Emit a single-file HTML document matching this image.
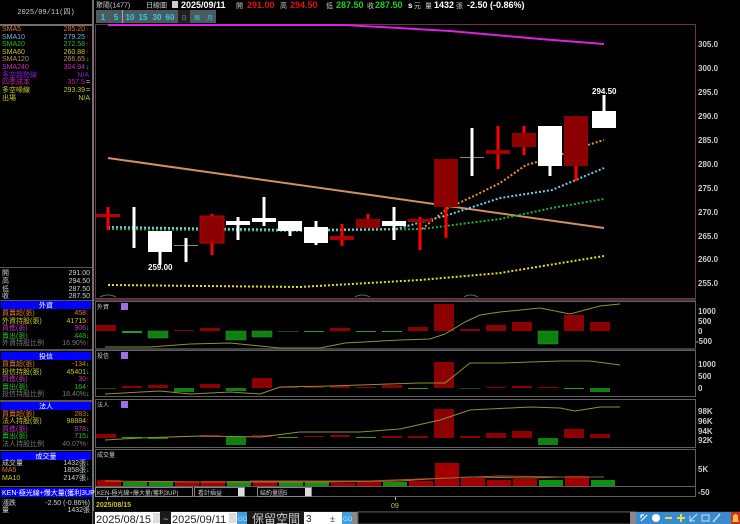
<!DOCTYPE html>
<html><head><meta charset="utf-8"><style>
html,body{margin:0;padding:0;background:#000;width:740px;height:524px;overflow:hidden}
svg{display:block}
text{font-family:"Liberation Sans","Noto Sans CJK TC",sans-serif}
.s{font-size:7px}
.m{font-family:"Liberation Mono","Noto Sans CJK TC",monospace}
</style></head><body>
<svg width="740" height="524" viewBox="0 0 740 524" xmlns="http://www.w3.org/2000/svg">
<rect width="740" height="524" fill="#000"/>
<rect x="92" y="0" width="2" height="524" fill="#707070"/>
<rect x="0" y="24" width="92" height="2" fill="#707070"/>
<text x="46" y="14" fill="#d0d0d0" font-size="7" text-anchor="middle" class="m">2025/09/11(四)</text>
<g class="s m" font-size="7">
<text x="2" y="31" fill="#e07830">SMA5</text><text x="85" y="31" fill="#e07830" text-anchor="end">285.20</text><text x="86" y="31" fill="#f00">↑</text>
<text x="2" y="39" fill="#70b8e0">SMA10</text><text x="85" y="39" fill="#70b8e0" text-anchor="end">279.25</text><text x="86" y="39" fill="#f00">↑</text>
<text x="2" y="46" fill="#20c020">SMA20</text><text x="85" y="46" fill="#20c020" text-anchor="end">272.58</text><text x="86" y="46" fill="#f00">↑</text>
<text x="2" y="54" fill="#c8c820">SMA60</text><text x="85" y="54" fill="#c8c820" text-anchor="end">260.88</text><text x="86" y="54" fill="#f00">↑</text>
<text x="2" y="61" fill="#c09060">SMA120</text><text x="85" y="61" fill="#c09060" text-anchor="end">266.65</text><text x="86" y="61" fill="#0f0">↓</text>
<text x="2" y="69" fill="#c030c0">SMA240</text><text x="85" y="69" fill="#c030c0" text-anchor="end">304.94</text><text x="86" y="69" fill="#0f0">↓</text>
<text x="2" y="77" fill="#8020d0">多空趨勢線</text><text x="89" y="77" fill="#8020d0" text-anchor="end">N/A</text>
<text x="2" y="84" fill="#c020a0">四季成本</text><text x="85" y="84" fill="#c020a0" text-anchor="end">357.5</text><text x="86" y="84" fill="#ccc">=</text>
<text x="2" y="92" fill="#c8c820">多空噪線</text><text x="85" y="92" fill="#c8c820" text-anchor="end">293.39</text><text x="86" y="92" fill="#ccc">=</text>
<text x="2" y="100" fill="#c8c820">出場</text><text x="90" y="100" fill="#c8c820" text-anchor="end">N/A</text>
</g>
<rect x="0" y="267" width="92" height="1" fill="#555"/>
<g font-size="7" class="m" fill="#d0d0d0">
<text x="2" y="275">開</text><text x="90" y="275" text-anchor="end">291.00</text>
<text x="2" y="283">高</text><text x="90" y="283" text-anchor="end">294.50</text>
<text x="2" y="291">低</text><text x="90" y="291" text-anchor="end">287.50</text>
<text x="2" y="298">收</text><text x="90" y="298" text-anchor="end">287.50</text>
</g>
<g font-size="7" class="m">
<rect x="0" y="300" width="92" height="1" fill="#555"/>
<rect x="1" y="301" width="90" height="8" fill="#0000ff"/><text x="46" y="307.5" fill="#fff" text-anchor="middle">外資</text>
<text x="2" y="315" fill="#e07830">買賣超(張)</text><text x="86" y="315" fill="#e07830" text-anchor="end">458</text><text x="86" y="315" fill="#f00">↑</text>
<text x="2" y="323" fill="#c8c820">外資持股(張)</text><text x="86" y="323" fill="#c8c820" text-anchor="end">41715</text><text x="86" y="323" fill="#f00">↑</text>
<text x="2" y="330" fill="#c030c0">買進(張)</text><text x="86" y="330" fill="#c030c0" text-anchor="end">906</text><text x="86" y="330" fill="#0f0">↓</text>
<text x="2" y="338" fill="#20c020">賣出(張)</text><text x="86" y="338" fill="#20c020" text-anchor="end">448</text><text x="86" y="338" fill="#0f0">↓</text>
<text x="2" y="345" fill="#777">外資持股比例</text><text x="86" y="345" fill="#777" text-anchor="end">16.90%</text><text x="86" y="345" fill="#f00">↑</text>
<rect x="0" y="349" width="92" height="2" fill="#555"/>
<rect x="1" y="352" width="90" height="8" fill="#0000ff"/><text x="46" y="358.5" fill="#fff" text-anchor="middle">投信</text>
<text x="2" y="366" fill="#e07830">買賣超(張)</text><text x="86" y="366" fill="#e07830" text-anchor="end">-134</text><text x="86" y="366" fill="#0f0">↓</text>
<text x="2" y="374" fill="#c8c820">投信持股(張)</text><text x="86" y="374" fill="#c8c820" text-anchor="end">45401</text><text x="86" y="374" fill="#0f0">↓</text>
<text x="2" y="381" fill="#c030c0">買進(張)</text><text x="86" y="381" fill="#c030c0" text-anchor="end">30</text><text x="86" y="381" fill="#f00">↑</text>
<text x="2" y="389" fill="#20c020">賣出(張)</text><text x="86" y="389" fill="#20c020" text-anchor="end">164</text><text x="86" y="389" fill="#f00">↑</text>
<text x="2" y="396" fill="#777">投信持股比例</text><text x="86" y="396" fill="#777" text-anchor="end">18.40%</text><text x="86" y="396" fill="#0f0">↓</text>
<rect x="0" y="400" width="92" height="2" fill="#555"/>
<rect x="1" y="402" width="90" height="8" fill="#0000ff"/><text x="46" y="408.5" fill="#fff" text-anchor="middle">法人</text>
<text x="2" y="416" fill="#e07830">買賣超(張)</text><text x="86" y="416" fill="#e07830" text-anchor="end">283</text><text x="86" y="416" fill="#0f0">↓</text>
<text x="2" y="423" fill="#c8c820">法人持股(張)</text><text x="86" y="423" fill="#c8c820" text-anchor="end">98884</text><text x="86" y="423" fill="#f00">↑</text>
<text x="2" y="431" fill="#c030c0">買進(張)</text><text x="86" y="431" fill="#c030c0" text-anchor="end">978</text><text x="86" y="431" fill="#0f0">↓</text>
<text x="2" y="438" fill="#20c020">賣出(張)</text><text x="86" y="438" fill="#20c020" text-anchor="end">715</text><text x="86" y="438" fill="#0f0">↓</text>
<text x="2" y="446" fill="#777">法人持股比例</text><text x="86" y="446" fill="#777" text-anchor="end">40.07%</text><text x="86" y="446" fill="#f00">↑</text>
<rect x="0" y="450" width="92" height="1" fill="#555"/>
<rect x="1" y="452" width="90" height="8" fill="#0000ff"/><text x="46" y="458.5" fill="#fff" text-anchor="middle">成交量</text>
<text x="2" y="465" fill="#d0d0d0">成交量</text><text x="86" y="465" fill="#d0d0d0" text-anchor="end">1432張</text><text x="86" y="465" fill="#0f0">↓</text>
<text x="2" y="472" fill="#e07830">MA5</text><text x="86" y="472" fill="#d0d0d0" text-anchor="end">1858張</text><text x="86" y="472" fill="#0f0">↓</text>
<text x="2" y="480" fill="#c8c820">MA10</text><text x="86" y="480" fill="#d0d0d0" text-anchor="end">2147張</text><text x="86" y="480" fill="#0f0">↓</text>
<rect x="0" y="486" width="92" height="1" fill="#555"/>
<rect x="1" y="488" width="91" height="9" fill="#0000ff"/><text x="2" y="495" fill="#fff">KEN-極光線+爆大量(獲利3UP)</text>
<text x="2" y="505" fill="#d0d0d0">漲跌</text><text x="90" y="505" fill="#d0d0d0" text-anchor="end">-2.50 (-0.86%)</text>
<text x="2" y="512" fill="#d0d0d0">量</text><text x="90" y="512" fill="#d0d0d0" text-anchor="end">1432張</text>
</g>
<g font-size="8">
<text x="96" y="7.5" fill="#ccc" font-size="7">聚陽(1477)</text>
<text x="146" y="7.5" fill="#ccc" font-size="7">日線圖</text>
<rect x="172" y="1" width="6" height="7" fill="#ccc"/>
<text x="181" y="8" fill="#fff" font-weight="bold" font-size="9">2025/09/11</text>
<text x="236" y="8" fill="#ccc" font-size="7">開</text><text x="247" y="8" fill="#e01010" font-weight="bold" font-size="9">291.00</text>
<text x="280" y="8" fill="#ccc" font-size="7">高</text><text x="290" y="8" fill="#e01010" font-weight="bold" font-size="9">294.50</text>
<text x="326" y="8" fill="#ccc" font-size="7">低</text><text x="336" y="8" fill="#20d020" font-weight="bold" font-size="9">287.50</text>
<text x="367" y="8" fill="#ccc" font-size="7">收</text><text x="375" y="8" fill="#20d020" font-weight="bold" font-size="9">287.50</text>
<text x="408" y="8" fill="#fff" font-weight="bold" font-size="8">s</text><text x="414" y="8" fill="#ccc" font-size="7">元</text>
<text x="425" y="8" fill="#ccc" font-size="7">量</text><text x="434" y="8" fill="#fff" font-weight="bold" font-size="9">1432</text>
<text x="456" y="8" fill="#ccc" font-size="7">張</text>
<text x="467" y="8" fill="#fff" font-weight="bold" font-size="9">-2.50 (-0.86%)</text>
</g>
<g font-size="8" font-weight="bold" fill="#30d0d8" text-anchor="middle">
<rect x="96" y="10" width="120" height="13" fill="#4a5a60"/>
<rect x="178" y="10" width="12" height="13" fill="#202020"/>
<rect x="122" y="10" width="1" height="13" fill="#aaa"/>
<text x="103" y="20">1</text><text x="116" y="20">5</text><text x="130" y="20">10</text><text x="143" y="20">15</text><text x="157" y="20">30</text><text x="170" y="20">60</text>
<text x="184" y="20" fill="#777" font-size="6" font-weight="normal">日</text><text x="197" y="20" font-size="6" font-weight="normal">周</text><text x="210" y="20" font-size="6" font-weight="normal">月</text>
</g>
<rect x="95.5" y="24.5" width="600" height="274" fill="none" stroke="#703050" stroke-width="1"/>
<rect x="94" y="299" width="602" height="2" fill="#503040"/>
<g font-size="8" fill="#ccc" font-weight="bold">
<text x="698" y="47">305.0</text><text x="698" y="71">300.0</text><text x="698" y="95">295.0</text><text x="698" y="119">290.0</text><text x="698" y="143">285.0</text><text x="698" y="167">280.0</text><text x="698" y="191">275.0</text><text x="698" y="215">270.0</text><text x="698" y="239">265.0</text><text x="698" y="262">260.0</text><text x="698" y="286">255.0</text>
</g>
<polyline points="108,25 345,25 450,31 540,39 604,44" fill="none" stroke="#e020e0" stroke-width="2"/>
<polyline points="108,158 604,228" fill="none" stroke="#d09060" stroke-width="2"/>
<polyline points="108,285 300,287 420,280 500,273 604,256" fill="none" stroke="#e0e020" stroke-width="2" stroke-dasharray="2,2"/>
<polyline points="108,229 300,231 422,229 500,219 552,208 604,199" fill="none" stroke="#20b040" stroke-width="2" stroke-dasharray="2,2"/>
<polyline points="108,227 300,230 396,229 448,215 500,198 552,190 578,179 604,168" fill="none" stroke="#80c8e8" stroke-width="2" stroke-dasharray="2,2"/>
<polyline points="422,229 448,208 474,196 500,183 526,165 552,158 578,148 604,140" fill="none" stroke="#f09030" stroke-width="2" stroke-dasharray="2,2"/>
<g>
<rect x="106.5" y="207" width="3" height="23" fill="#f00"/><rect x="96" y="214" width="24" height="3" fill="#c00000"/>
<rect x="132.5" y="207" width="3" height="41" fill="#fff"/>
<rect x="158.5" y="250" width="3" height="15" fill="#fff"/><rect x="148" y="231" width="24" height="21" fill="#fff"/>
<rect x="174" y="245" width="24" height="1" fill="#888"/><rect x="184.5" y="238" width="3" height="24" fill="#fff"/>
<rect x="210.5" y="214" width="3" height="41" fill="#f00"/><rect x="200" y="216" width="24" height="27" fill="#8b0000" stroke="#c00000"/>
<rect x="236.5" y="217" width="3" height="23" fill="#fff"/><rect x="226" y="221" width="24" height="4" fill="#fff"/>
<rect x="262.5" y="197" width="3" height="29" fill="#fff"/><rect x="252" y="218" width="24" height="4" fill="#fff"/>
<rect x="288.5" y="229" width="3" height="7" fill="#fff"/><rect x="278" y="221" width="24" height="10" fill="#fff"/>
<rect x="314.5" y="221" width="3" height="24" fill="#fff"/><rect x="304" y="227" width="24" height="16" fill="#fff"/>
<rect x="340.5" y="224" width="3" height="22" fill="#f00"/><rect x="330" y="236" width="24" height="4" fill="#b00000"/>
<rect x="366.5" y="214" width="3" height="10" fill="#f00"/><rect x="356" y="219" width="24" height="9" fill="#8b0000"/>
<rect x="392.5" y="207" width="3" height="33" fill="#fff"/><rect x="382" y="221" width="24" height="5" fill="#fff"/>
<rect x="418.5" y="217" width="3" height="33" fill="#f00"/><rect x="408" y="219" width="24" height="3" fill="#a00000"/>
<rect x="444.5" y="205" width="3" height="33" fill="#f00"/><rect x="434" y="159" width="24" height="48" fill="#8b0000"/>
<rect x="460" y="157" width="24" height="1" fill="#888"/><rect x="470.5" y="128" width="3" height="48" fill="#fff"/>
<rect x="496.5" y="126" width="3" height="43" fill="#f00"/><rect x="486" y="150" width="24" height="4" fill="#a00000"/>
<rect x="522.5" y="126" width="3" height="29" fill="#f00"/><rect x="512" y="133" width="24" height="14" fill="#8b0000"/>
<rect x="548.5" y="164" width="3" height="12" fill="#fff"/><rect x="538" y="126" width="24" height="40" fill="#fff"/>
<rect x="574.5" y="164" width="3" height="17" fill="#f00"/><rect x="564" y="116" width="24" height="50" fill="#8b0000"/>
<rect x="602.5" y="95" width="3" height="17" fill="#fff"/><rect x="592" y="111" width="24" height="17" fill="#fff"/>
</g>
<text x="148" y="270" fill="#fff" font-size="8" font-weight="bold">259.00</text>
<text x="592" y="94" fill="#fff" font-size="8" font-weight="bold">294.50</text>
<path d="M100,297 Q108,293 116,297 M355,297 Q362,293 370,297 M464,297 Q470,293 478,297" stroke="#3a7a5a" fill="none"/>
<g fill="none" stroke="#606060">
<rect x="95.5" y="301.5" width="600" height="47"/>
<rect x="95.5" y="350.5" width="600" height="46"/>
<rect x="95.5" y="399.5" width="600" height="48"/>
<rect x="95.5" y="449.5" width="600" height="37"/>
<rect x="95.5" y="486.5" width="600" height="10"/>
</g>
<rect x="95" y="348" width="601" height="2" fill="#404040"/>
<g font-size="6" fill="#ccc">
<text x="97" y="309">外資</text><text x="97" y="358">投信</text><text x="97" y="407">法人</text><text x="97" y="457">成交量</text>
</g>
<rect x="121" y="303" width="7" height="7" fill="#a070e0"/><rect x="121" y="352" width="7" height="7" fill="#a070e0"/><rect x="121" y="401" width="7" height="7" fill="#a070e0"/>
<g font-size="8" fill="#ccc" font-weight="bold">
<text x="698" y="314">1000</text><text x="698" y="324">500</text><text x="698" y="334">0</text><text x="696" y="344">-500</text>
<text x="698" y="367">1000</text><text x="698" y="379">500</text><text x="698" y="391">0</text>
<text x="698" y="414">98K</text><text x="698" y="424">96K</text><text x="698" y="434">94K</text><text x="698" y="443">92K</text>
<text x="698" y="472">5K</text><text x="698" y="495">-50</text>
</g>
<g>
<rect x="96" y="325" width="20" height="6" fill="#8b0000"/>
<rect x="122" y="331" width="20" height="2" fill="#20a020"/>
<rect x="148" y="331" width="20" height="7" fill="#108010" stroke="#20a020" stroke-width="0.5"/>
<rect x="174" y="330" width="20" height="1" fill="#8b0000"/>
<rect x="200" y="328" width="20" height="3" fill="#8b0000"/>
<rect x="226" y="331" width="20" height="9" fill="#108010" stroke="#20a020" stroke-width="0.5"/>
<rect x="252" y="331" width="20" height="6" fill="#108010" stroke="#20a020" stroke-width="0.5"/>
<rect x="278" y="331" width="20" height="1" fill="#105010"/>
<rect x="304" y="331" width="20" height="1" fill="#20a020"/>
<rect x="330" y="328" width="20" height="3" fill="#8b0000"/>
<rect x="356" y="331" width="20" height="1" fill="#20a020"/>
<rect x="382" y="331" width="20" height="1" fill="#20a020"/>
<rect x="408" y="327" width="20" height="4" fill="#8b0000"/>
<rect x="434" y="304" width="20" height="27" fill="#8b0000"/>
<rect x="460" y="329" width="20" height="2" fill="#8b0000"/>
<rect x="486" y="325" width="20" height="6" fill="#8b0000"/>
<rect x="512" y="322" width="20" height="9" fill="#8b0000"/>
<rect x="538" y="331" width="20" height="13" fill="#108010" stroke="#20a020" stroke-width="0.5"/>
<rect x="564" y="315" width="20" height="16" fill="#8b0000"/>
<rect x="590" y="322" width="20" height="9" fill="#8b0000"/>
<polyline points="105,347 150,347 190,344 230,343 250,345 280,348 320,348 345,343 400,340 430,339 445,334 465,322 480,315 500,312 540,308 570,314 600,306 620,304" fill="none" stroke="#909030"/>
</g>
<g>
<rect x="96" y="388" width="20" height="1" fill="#105010"/>
<rect x="122" y="386" width="20" height="2" fill="#8b0000"/>
<rect x="148" y="385" width="20" height="3" fill="#8b0000"/>
<rect x="174" y="388" width="20" height="4" fill="#108010"/>
<rect x="200" y="384" width="20" height="4" fill="#8b0000"/>
<rect x="226" y="388" width="20" height="3" fill="#108010"/>
<rect x="252" y="378" width="20" height="10" fill="#8b0000"/>
<rect x="278" y="387" width="20" height="1" fill="#8b0000"/>
<rect x="304" y="387" width="20" height="1" fill="#8b0000"/>
<rect x="330" y="386" width="20" height="2" fill="#8b0000"/>
<rect x="356" y="387" width="20" height="1" fill="#8b0000"/>
<rect x="382" y="385" width="20" height="3" fill="#8b0000"/>
<rect x="408" y="388" width="20" height="1" fill="#20a020"/>
<rect x="434" y="362" width="20" height="26" fill="#8b0000"/>
<rect x="460" y="388" width="20" height="1" fill="#105010"/>
<rect x="486" y="387" width="20" height="1" fill="#8b0000"/>
<rect x="512" y="386" width="20" height="2" fill="#8b0000"/>
<rect x="538" y="387" width="20" height="1" fill="#8b0000"/>
<rect x="564" y="388" width="20" height="1" fill="#20a020"/>
<rect x="590" y="388" width="20" height="4" fill="#108010"/>
<polyline points="105,394 160,391 190,394 230,392 260,394 280,387 330,386 360,385 420,383 445,383 470,363 500,363 560,361 590,361 620,365" fill="none" stroke="#909030"/>
</g>
<g>
<rect x="96" y="434" width="20" height="4" fill="#8b0000"/>
<rect x="122" y="437" width="20" height="1" fill="#20a020"/>
<rect x="148" y="437" width="20" height="2" fill="#108010"/>
<rect x="174" y="436" width="20" height="1" fill="#8b0000"/>
<rect x="200" y="435" width="20" height="2" fill="#8b0000"/>
<rect x="226" y="437" width="20" height="8" fill="#108010"/>
<rect x="252" y="435" width="20" height="2" fill="#8b0000"/>
<rect x="278" y="437" width="20" height="1" fill="#20a020"/>
<rect x="304" y="436" width="20" height="1" fill="#8b0000"/>
<rect x="330" y="435" width="20" height="2" fill="#8b0000"/>
<rect x="356" y="437" width="20" height="1" fill="#20a020"/>
<rect x="382" y="436" width="20" height="2" fill="#8b0000"/>
<rect x="408" y="436" width="20" height="2" fill="#8b0000"/>
<rect x="434" y="409" width="20" height="29" fill="#8b0000"/>
<rect x="460" y="436" width="20" height="2" fill="#8b0000"/>
<rect x="486" y="433" width="20" height="5" fill="#8b0000"/>
<rect x="512" y="431" width="20" height="7" fill="#8b0000"/>
<rect x="538" y="438" width="20" height="7" fill="#108010"/>
<rect x="564" y="429" width="20" height="9" fill="#8b0000"/>
<rect x="590" y="434" width="20" height="4" fill="#8b0000"/>
<polyline points="105,440 140,438 200,436 260,437 300,432 360,432 400,429 440,420 470,410 530,407 560,408 575,411 600,407 620,407" fill="none" stroke="#909030"/>
</g>
<!-- volume (bottom 486) -->
<g>
<rect x="97" y="480" width="24" height="6" fill="#a00000"/>
<rect x="123" y="482" width="24" height="4" fill="#109010"/>
<rect x="149" y="481" width="24" height="5" fill="#109010"/>
<rect x="175" y="482" width="24" height="4" fill="#a00000"/>
<rect x="201" y="481" width="24" height="5" fill="#a00000"/>
<rect x="227" y="481" width="24" height="5" fill="#109010"/>
<rect x="253" y="482" width="24" height="4" fill="#a00000"/>
<rect x="279" y="482" width="24" height="4" fill="#109010"/>
<rect x="305" y="481" width="24" height="5" fill="#109010"/>
<rect x="331" y="483" width="24" height="3" fill="#a00000"/>
<rect x="357" y="482" width="24" height="4" fill="#a00000"/>
<rect x="383" y="482" width="24" height="4" fill="#109010"/>
<rect x="409" y="481" width="24" height="5" fill="#a00000"/>
<rect x="435" y="463" width="24" height="23" fill="#a00000"/>
<rect x="461" y="478" width="24" height="8" fill="#a00000"/>
<rect x="487" y="480" width="24" height="6" fill="#a00000"/>
<rect x="513" y="479" width="24" height="7" fill="#a00000"/>
<rect x="539" y="480" width="24" height="6" fill="#109010"/>
<rect x="565" y="476" width="24" height="10" fill="#a00000"/>
<rect x="591" y="480" width="24" height="6" fill="#109010"/>
<polyline points="105,481 200,482 330,482 400,481 430,479 470,477 530,478 560,477" fill="none" stroke="#d06020"/>
<polyline points="250,481 370,481 420,479 500,476 560,477 604,477" fill="none" stroke="#906030"/>
</g>
<g font-size="6">
<rect x="95.5" y="487.5" width="97" height="9" fill="#000" stroke="#888"/><text x="97" y="495" fill="#ccc">KEN-極光線+爆大量(獲利3UP)</text>
<rect x="194.5" y="487.5" width="50" height="9" fill="#000" stroke="#888"/><text x="198" y="495" fill="#ccc">看計插益</text><rect x="238" y="488" width="6" height="8" fill="#ddd"/>
<rect x="257.5" y="487.5" width="54" height="9" fill="#000" stroke="#888"/><text x="260" y="495" fill="#ccc">結約量圖5</text><rect x="305" y="488" width="6" height="8" fill="#ddd"/>
</g>
<text x="96" y="507" fill="#c8c820" font-size="7" font-weight="bold">2025/08/15</text>
<rect x="107" y="497" width="1" height="3" fill="#c8c820"/>
<rect x="395" y="497" width="1" height="3" fill="#c8c820"/>
<text x="391" y="508" fill="#c8c820" font-size="7">09</text>
<rect x="93" y="511" width="647" height="13" fill="#1a1a1a"/>
<rect x="95" y="512" width="65" height="12" fill="#fff"/><text x="96" y="523" fill="#222" font-size="11" font-family="Liberation Serif">2025/08/15</text><rect x="153" y="513" width="7" height="10" fill="#ddd"/>
<text x="163" y="522" fill="#ccc" font-size="9">~</text>
<rect x="171" y="512" width="66" height="12" fill="#fff"/><text x="172" y="523" fill="#222" font-size="11" font-family="Liberation Serif">2025/09/11</text><rect x="229" y="513" width="7" height="10" fill="#ddd"/>
<rect x="237" y="512" width="10" height="12" fill="#40a0e0"/><text x="238" y="521" fill="#cde" font-size="6">GO</text>
<text x="252" y="523" fill="#ccc" font-size="12">保留空間</text>
<rect x="304" y="512" width="38" height="12" fill="#fff"/><text x="306" y="522" fill="#222" font-size="10">3</text><text x="330" y="522" fill="#444" font-size="9">±</text>
<rect x="342" y="512" width="10" height="12" fill="#40a0e0"/><text x="343" y="521" fill="#cde" font-size="6">GO</text>
<rect x="352" y="512" width="6" height="12" fill="#888"/>
<rect x="358" y="512" width="277" height="12" fill="#000" stroke="#555"/>
<rect x="630" y="512" width="6" height="12" fill="#888"/>
<rect x="636" y="512" width="95" height="12" fill="#3a8ad0"/>
<g fill="none" stroke="#fff" stroke-width="1.2">
<path d="M641,521 L647,515 M641,515 L641,518 M641,515 L644,515"/>
<circle cx="656" cy="518" r="4" fill="#fff" stroke="none"/>
</g>
<rect x="665" y="517" width="7" height="2" fill="#e0e040"/>
<rect x="677" y="517" width="8" height="2" fill="#e0e040"/><rect x="680" y="514" width="2" height="8" fill="#e0e040"/>
<path d="M690,521 L697,514 M690,516 L690,521 L695,521" stroke="#cde" fill="none"/>
<path d="M702,515 h7 v6 h-7z" stroke="#cde" fill="none"/>
<path d="M713,522 L720,514" stroke="#cde" stroke-width="1.5"/>
<rect x="731" y="512" width="9" height="12" fill="#d03020"/>
<path d="M732,522 h7 l-1,-2 v-3 a2.5,3 0 0 0 -5,0 v3z" fill="#f0c040"/>
</svg>
</body></html>
